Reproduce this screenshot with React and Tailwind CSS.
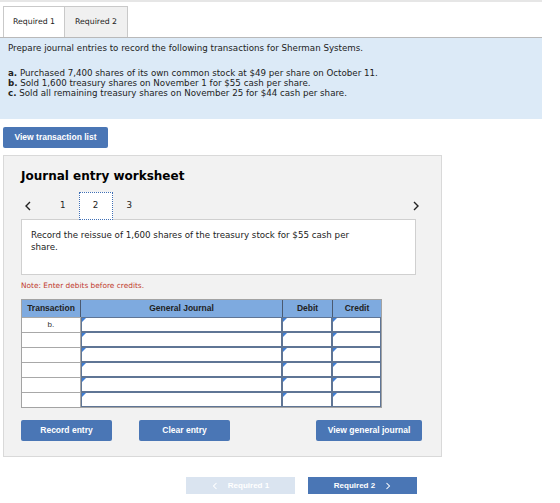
import React from 'react';

const rows = ['b.', '', '', '', '', ''];

const InputCell = ({ w }) => (
  <div className={`relative h-full border border-[#5f7595] bg-white ${w}`}>
    <span className="absolute left-0 top-0 h-0 w-0 border-l-[4px] border-b-[4px] border-l-[#3f7fd6] border-b-transparent" />
  </div>
);

const Chevron = ({ dir, color = '#222', w = 8, h = 10 }) => (
  <svg width={w} height={h} viewBox="0 0 8 10" fill="none" stroke={color} strokeWidth="1.4">
    {dir === 'left' ? <polyline points="6,1 2,5 6,9" /> : <polyline points="2,1 6,5 2,9" />}
  </svg>
);

const App = () => {
  return (
    <div className="w-[560px] h-[503px] bg-white text-[#222]" style={{ fontFamily: '"DejaVu Sans", Verdana, sans-serif' }}>
      <div className="h-[2px] w-[542px] bg-[#e6e6e6]" />

      {/* tabs */}
      <div className="mt-[4px] flex pl-[3px]">
        <div className="flex h-[31px] w-[62px] items-center justify-center border border-b-0 border-[#c9c9c9] bg-white text-[7.8px]">
          Required 1
        </div>
        <div className="flex h-[31px] w-[63px] items-center justify-center border border-l-0 border-b-0 border-[#c9c9c9] bg-[#f0f0f0] text-[7.8px]">
          Required 2
        </div>
      </div>

      {/* instructions */}
      <div className="h-[82px] w-[542px] border-t border-[#b9b9b9] bg-[#dceaf7] pl-[8px] pt-[5px] text-[8.7px] leading-[10px]">
        <p>Prepare journal entries to record the following transactions for Sherman Systems.</p>
        <div className="mt-[15px]">
          <p><b>a.</b> Purchased 7,400 shares of its own common stock at $49 per share on October 11.</p>
          <p><b>b.</b> Sold 1,600 treasury shares on November 1 for $55 cash per share.</p>
          <p><b>c.</b> Sold all remaining treasury shares on November 25 for $44 cash per share.</p>
        </div>
      </div>

      <button
        className="ml-[3px] mt-[8px] flex h-[21px] w-[105px] items-center justify-center rounded-[2px] bg-[#4a76b5] text-[8.5px] font-bold text-white"
        style={{ fontFamily: '"Liberation Sans", Arial, sans-serif' }}
      >
        View transaction list
      </button>

      {/* worksheet */}
      <div className="ml-[3px] mt-[7px] h-[302px] w-[439px] border border-[#d9d9d9] bg-[#f2f2f2] pl-[17px]">
        <h2 className="mt-[13px] h-[14px] text-[12px] font-bold leading-[14px] text-black">Journal entry worksheet</h2>

        <div className="mt-[9px] flex h-[28px] items-center text-[8.7px]">
          <span className="ml-[3px] flex"><Chevron dir="left" /></span>
          <span className="ml-[28px]">1</span>
          <div className="ml-[13px] flex h-[28px] w-[34px] items-center justify-center border border-dotted border-[#3f6fb5] bg-white">2</div>
          <span className="ml-[14px]">3</span>
          <span className="ml-auto mr-[21px] flex"><Chevron dir="right" /></span>
        </div>

        <div className="-mt-[1px] h-[56px] w-[395px] border border-[#d0d0d0] bg-white pl-[9px] pt-[9px] text-[8.7px] leading-[12px]">
          Record the reissue of 1,600 shares of the treasury stock for $55 cash per
          <br />
          share.
        </div>

        <p className="mt-[6px] h-[10px] text-[7.4px] leading-[10px] text-[#c0392b]">Note: Enter debits before credits.</p>

        {/* table */}
        <div
          className="mt-[8px] w-[361px] border border-[#a3a3a3] bg-white"
          style={{ fontFamily: '"Liberation Sans", Arial, sans-serif' }}
        >
          <div className="flex h-[17px] bg-[#7eaadf] text-[8.5px] font-bold text-[#222]">
            <div className="flex w-[59px] items-center justify-center border-r border-[#4b5a70]">Transaction</div>
            <div className="flex w-[202px] items-center justify-center border-r border-[#4b5a70]">General Journal</div>
            <div className="flex w-[50px] items-center justify-center border-r border-[#4b5a70]">Debit</div>
            <div className="flex w-[48px] items-center justify-center">Credit</div>
          </div>
          {rows.map((r, i) => (
            <div key={i} className="flex h-[15px]">
              <div className="flex w-[59px] items-center justify-center border-r border-t border-[#a8a8a8] text-[8px] text-[#333]">
                {r}
              </div>
              <InputCell w="w-[202px]" />
              <InputCell w="w-[50px]" />
              <InputCell w="w-[49px]" />
            </div>
          ))}
        </div>

        <div
          className="mt-[12px] flex h-[21px] pr-[19px] text-[8.5px] font-bold text-white"
          style={{ fontFamily: '"Liberation Sans", Arial, sans-serif' }}
        >
          <button className="w-[91px] rounded-[2px] bg-[#4a76b5]">Record entry</button>
          <button className="ml-[27px] w-[91px] rounded-[2px] bg-[#4a76b5]">Clear entry</button>
          <button className="ml-auto w-[106px] rounded-[2px] bg-[#4a76b5]">View general journal</button>
        </div>
      </div>

      {/* bottom nav */}
      <div
        className="mt-[20px] flex h-[17px] pl-[186px] text-[8px] font-bold text-white"
        style={{ fontFamily: '"Liberation Sans", Arial, sans-serif' }}
      >
        <button className="flex w-[109px] items-center justify-center gap-[10px] bg-[#dae4f0]">
          <Chevron dir="left" color="#ffffff" w={6} h={8} /> Required 1
        </button>
        <button className="ml-[13px] flex w-[109px] items-center justify-center gap-[10px] bg-[#4a76b5]">
          Required 2 <Chevron dir="right" color="#ffffff" w={6} h={8} />
        </button>
      </div>
    </div>
  );
};

export default App;
